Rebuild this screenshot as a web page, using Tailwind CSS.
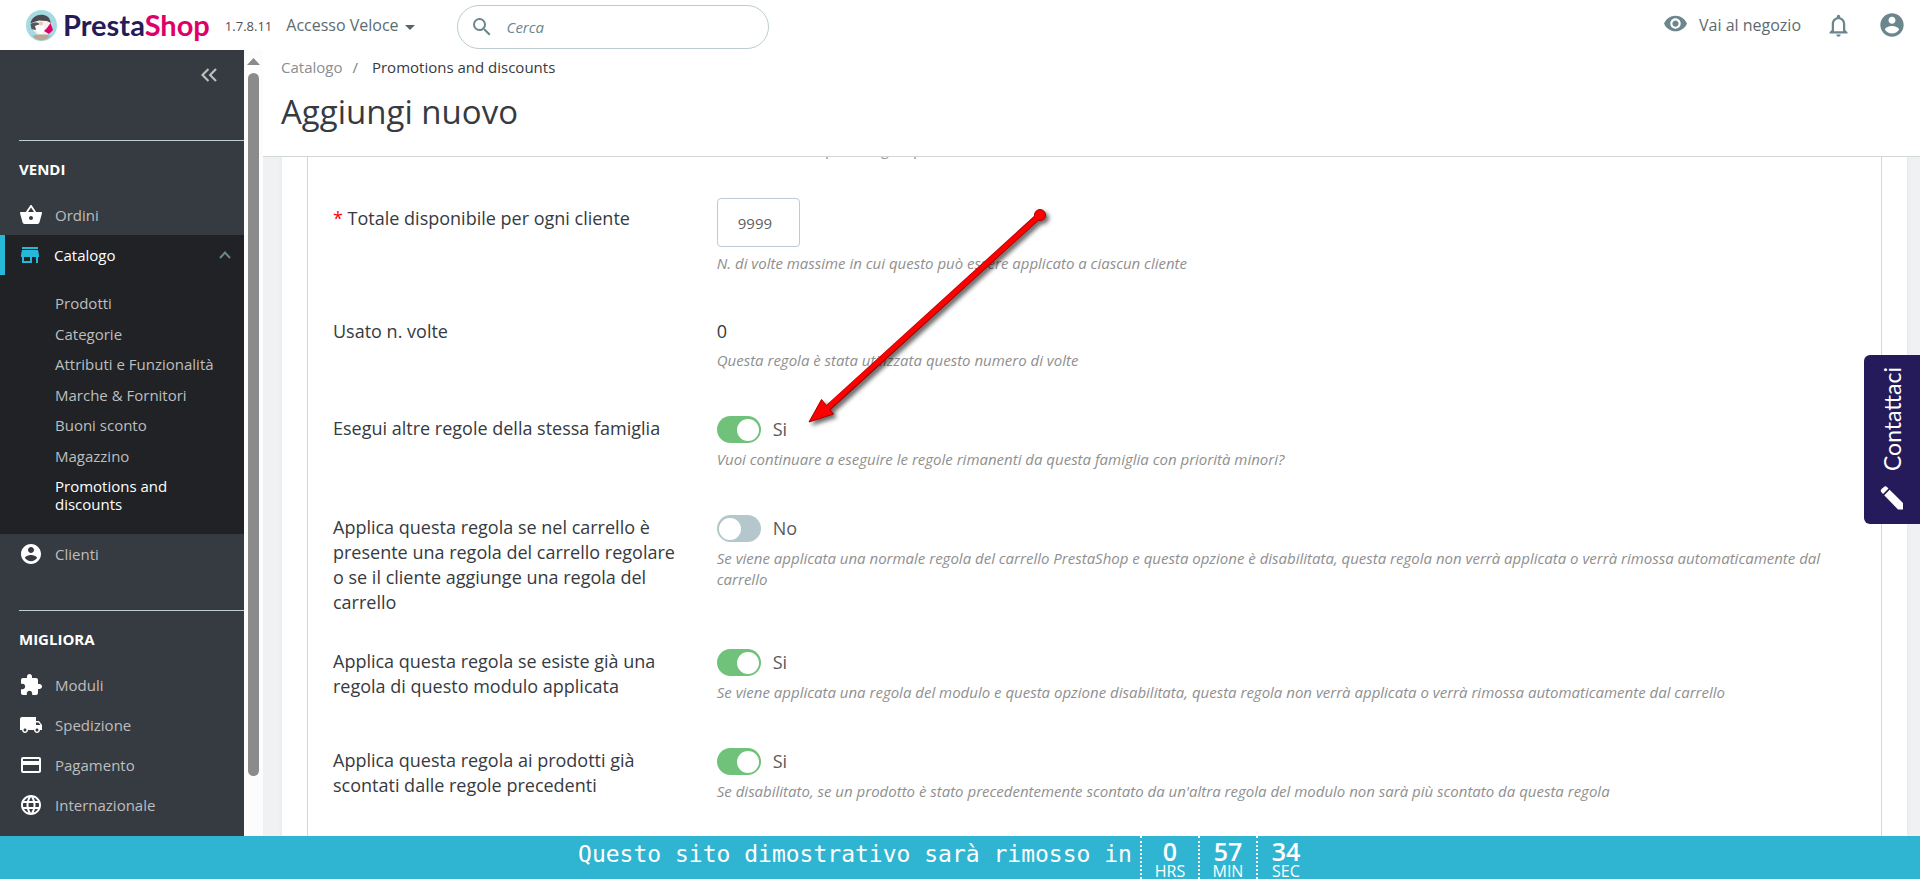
<!DOCTYPE html>
<html lang="it">
<head>
    <meta charset="UTF-8">
    <meta name="viewport" content="width=device-width, initial-scale=1.0">
    <title>Promotions and discounts • PrestaShop</title>
    <script src="https://cdn.jsdelivr.net/npm/@tailwindcss/browser@4"></script>
</head>
<body class="h-screen flex flex-col overflow-hidden bg-white text-[#363a41] font-['Open_Sans',sans-serif]">

<!-- Top bar -->
<header class="h-[50px] shrink-0 flex items-center pl-[26px] pr-[14px]">
    <a href="#" class="flex items-center gap-[6px]">
        <svg class="w-[31px] h-[31px]" viewBox="0 0 31 31">
            <circle cx="15.5" cy="15.5" r="15.5" fill="#a4dbe3"/>
            <path d="M6 15C7 8 11 5 16 5c6 0 9 4.500 9.500 10.500l-2 8-10 3-6-6z" fill="#f4f1f2"/>
            <path d="M4.500 13.500C5.500 7.500 10.500 4.500 16 4.700c5.500.2 8 3.300 9 8.300l-4-2-8-.5-5 1.500z" fill="#4c4a50"/>
            <path d="M4.500 14.500c2-2 5-2.500 8-1.500l1 2-4 5-4-1z" fill="#54565b"/>
            <path d="M9 16c3-2 6-2 9 0 1 3 0 6-3 8-3-1-5-3-6-8z" fill="#fff"/>
            <circle cx="15" cy="13.500" r="2" fill="#e9c9a8"/>
            <path d="M24.500 13l2.500 7-4 4-5-3 3-3z" fill="#df0067"/>
            <path d="M6.500 25.500c5-1.500 13-1.500 18 0-5 6.500-14 6.500-18 0z" fill="#b9a792"/>
        </svg>
        <span class="font-['Lato',sans-serif] font-bold text-[29px] leading-[30px] text-[#251b5b]">Presta<span class="text-[#df0067]">Shop</span></span>
    </a>
    <span class="ml-[15px] pt-1 text-[13px] text-[#4b5358]">1.7.8.11</span>
    <button class="ml-[14px] flex items-center gap-[6px] text-[16px] text-[#5c6b70]">Accesso Veloce
        <svg class="w-[10px] h-[5px] mt-1" viewBox="0 0 10 5"><path d="M0 0h10L5 5z" fill="#54666c"/></svg>
    </button>
    <form class="ml-[42px] mt-1 w-[312px] h-11 flex items-center gap-[13px] pl-3 border border-[#bbcdd2] rounded-full">
        <svg class="w-6 h-6 shrink-0 text-[#6c868e]" viewBox="0 0 24 24" fill="currentColor"><path d="M15.500 14h-.79l-.28-.27A6.471 6.471 0 0 0 16 9.500 6.500 6.500 0 1 0 9.500 16c1.610 0 3.090-.59 4.230-1.570l.27.28v.79l5 4.990L20.490 19l-4.990-5zm-6 0C7.010 14 5 11.990 5 9.500S7.010 5 9.500 5 14 7.010 14 9.500 11.990 14 9.500 14z"/></svg>
        <input type="text" aria-label="Cerca" placeholder="Cerca" class="w-full text-[15px] italic outline-none placeholder:text-[#6c868e]">
    </form>
    <div class="ml-auto flex items-center">
        <a href="#" class="flex items-center gap-[11px] text-[16px] text-[#5c6b70]">
            <svg class="w-[25px] h-[25px] -mt-1 text-[#6c868e]" viewBox="0 0 24 24" fill="currentColor"><path d="M12 4.500C7 4.500 2.730 7.610 1 12c1.730 4.390 6 7.500 11 7.500s9.270-3.110 11-7.500c-1.730-4.390-6-7.500-11-7.500zM12 17c-2.760 0-5-2.240-5-5s2.240-5 5-5 5 2.240 5 5-2.240 5-5 5zm0-8c-1.660 0-3 1.340-3 3s1.340 3 3 3 3-1.340 3-3-1.340-3-3-3z"/></svg>
            Vai al negozio
        </a>
        <button class="ml-6" aria-label="Notifiche">
            <svg class="w-[27px] h-[27px] text-[#6c868e]" viewBox="0 0 24 24" fill="currentColor"><path d="M12 22c1.100 0 2-.9 2-2h-4c0 1.100.89 2 2 2zm6-6v-5c0-3.070-1.640-5.640-4.500-6.320V4c0-.83-.67-1.500-1.500-1.500s-1.500.67-1.500 1.500v.68C7.630 5.360 6 7.920 6 11v5l-2 2v1h16v-1l-2-2zm-2 1H8v-6c0-2.480 1.510-4.500 4-4.500s4 2.020 4 4.500v6z"/></svg>
        </button>
        <button class="ml-[26px]" aria-label="Profilo">
            <svg class="w-[28px] h-[28px] text-[#6c868e]" viewBox="0 0 24 24" fill="currentColor"><path d="M12 2C6.480 2 2 6.480 2 12s4.480 10 10 10 10-4.480 10-10S17.520 2 12 2zm0 3c1.660 0 3 1.340 3 3s-1.340 3-3 3-3-1.340-3-3 1.340-3 3-3zm0 14.200c-2.500 0-4.710-1.280-6-3.220.03-1.990 4-3.080 6-3.080 1.990 0 5.970 1.090 6 3.080-1.290 1.940-3.500 3.220-6 3.220z"/></svg>
        </button>
    </div>
</header>

<div class="flex-1 min-h-0 flex">
    <!-- Sidebar -->
    <nav class="w-[244px] shrink-0 overflow-hidden bg-[#363a41] text-[15px] text-[#bebebe]">
        <div class="h-[90px] flex justify-end items-start pt-[12px] pr-[22px]">
            <button aria-label="Comprimi menu">
                <svg class="w-[26px] h-[26px]" viewBox="0 0 24 24" fill="none" stroke="#bebebe" stroke-width="2"><path d="M11.500 6.500L6 12l5.500 5.500M18.500 6.500L13 12l5.500 5.500"/></svg>
            </button>
        </div>
        <div class="ml-[19px] border-t border-[#bbcdd2] pt-[18px] pb-4 leading-5 font-bold text-white">VENDI</div>
        <a href="#" class="h-10 flex items-center gap-3 pl-[19px]">
            <svg class="w-6 h-6 text-white" viewBox="0 0 24 24" fill="currentColor"><path d="M17.210 9l-4.380-6.560c-.19-.28-.51-.42-.83-.42-.32 0-.64.14-.83.43L6.790 9H2c-.55 0-1 .45-1 1 0 .09.01.18.04.27l2.540 9.270c.23.84 1 1.460 1.920 1.460h13c.92 0 1.690-.62 1.930-1.460l2.540-9.270L23 10c0-.55-.45-1-1-1h-4.790zM9 9l3-4.400L15 9H9zm3 8c-1.100 0-2-.9-2-2s.9-2 2-2 2 .9 2 2-.9 2-2 2z"/></svg>
            Ordini
        </a>
        <div class="bg-[#202226] pb-[21px]">
            <a href="#" class="h-10 flex items-center gap-3 pl-[13px] pr-[11px] border-l-[5px] border-[#25b9d7] text-white">
                <svg class="w-6 h-6 text-[#25b9d7]" viewBox="0 0 24 24" fill="currentColor"><path d="M20 4H4v2h16V4zm1 10v-2l-1-5H4l-1 5v2h1v6h10v-6h4v6h2v-6h1zm-9 4H6v-4h6v4z"/></svg>
                Catalogo
                <svg class="w-4 h-4 ml-auto" viewBox="0 0 16 16" fill="none" stroke="#6c868e" stroke-width="2"><path d="M3 11l5-5.500L13 11"/></svg>
            </a>
            <ul class="h-[238px] pt-[19px] pl-[55px] pr-6 flex flex-col justify-between leading-[18px]">
                <li><a href="#">Prodotti</a></li>
                <li><a href="#">Categorie</a></li>
                <li><a href="#" class="whitespace-nowrap">Attributi e Funzionalità</a></li>
                <li><a href="#">Marche &amp; Fornitori</a></li>
                <li><a href="#">Buoni sconto</a></li>
                <li><a href="#">Magazzino</a></li>
                <li><a href="#" class="text-white">Promotions and discounts</a></li>
            </ul>
        </div>
        <a href="#" class="h-10 flex items-center gap-3 pl-[19px]">
            <svg class="w-6 h-6 text-white" viewBox="0 0 24 24" fill="currentColor"><path d="M12 2C6.480 2 2 6.480 2 12s4.480 10 10 10 10-4.480 10-10S17.520 2 12 2zm0 3c1.660 0 3 1.340 3 3s-1.340 3-3 3-3-1.340-3-3 1.340-3 3-3zm0 14.200c-2.500 0-4.710-1.280-6-3.220.03-1.990 4-3.080 6-3.080 1.990 0 5.970 1.090 6 3.080-1.290 1.940-3.500 3.220-6 3.220z"/></svg>
            Clienti
        </a>
        <div class="ml-[19px] mt-9 border-t border-[#bbcdd2] pt-[18px] pb-4 leading-5 font-bold text-white">MIGLIORA</div>
        <a href="#" class="h-10 flex items-center gap-3 pl-[19px]">
            <svg class="w-6 h-6 text-white" viewBox="0 0 24 24" fill="currentColor"><path d="M20.500 11H19V7c0-1.100-.9-2-2-2h-4V3.500C13 2.120 11.880 1 10.500 1S8 2.120 8 3.500V5H4c-1.100 0-1.990.9-1.990 2v3.800H3.500c1.490 0 2.700 1.210 2.700 2.700s-1.210 2.700-2.700 2.700H2V20c0 1.100.9 2 2 2h3.800v-1.500c0-1.490 1.210-2.700 2.700-2.700 1.490 0 2.700 1.210 2.700 2.700V22H17c1.100 0 2-.9 2-2v-4h1.500c1.380 0 2.500-1.120 2.500-2.500S21.880 11 20.500 11z"/></svg>
            Moduli
        </a>
        <a href="#" class="h-10 flex items-center gap-3 pl-[19px]">
            <svg class="w-6 h-6 text-white" viewBox="0 0 24 24" fill="currentColor"><path d="M20 8h-3V4H3c-1.100 0-2 .9-2 2v11h2c0 1.660 1.340 3 3 3s3-1.340 3-3h6c0 1.660 1.340 3 3 3s3-1.340 3-3h2v-5l-3-4zM6 18.500c-.83 0-1.500-.67-1.500-1.500s.67-1.500 1.500-1.500 1.500.67 1.500 1.500-.67 1.500-1.500 1.500zm13.500-9l1.960 2.500H17V9.500h2.500zm-1.500 9c-.83 0-1.500-.67-1.500-1.500s.67-1.500 1.500-1.500 1.500.67 1.500 1.500-.67 1.500-1.500 1.500z"/></svg>
            Spedizione
        </a>
        <a href="#" class="h-10 flex items-center gap-3 pl-[19px]">
            <svg class="w-6 h-6 text-white" viewBox="0 0 24 24" fill="currentColor"><path d="M20 4H4c-1.110 0-1.990.89-1.990 2L2 18c0 1.110.89 2 2 2h16c1.110 0 2-.89 2-2V6c0-1.110-.89-2-2-2zm0 14H4v-6h16v6zm0-10H4V6h16v2z"/></svg>
            Pagamento
        </a>
        <a href="#" class="h-10 flex items-center gap-3 pl-[19px]">
            <svg class="w-6 h-6 text-white" viewBox="0 0 24 24" fill="currentColor"><path d="M11.990 2C6.470 2 2 6.480 2 12s4.470 10 9.990 10C17.520 22 22 17.520 22 12S17.520 2 11.990 2zm6.930 6h-2.950c-.32-1.250-.78-2.450-1.380-3.560 1.840.63 3.370 1.910 4.330 3.560zM12 4.040c.83 1.200 1.480 2.530 1.910 3.960h-3.820c.43-1.430 1.080-2.760 1.910-3.960zM4.260 14C4.100 13.360 4 12.690 4 12s.1-1.360.26-2h3.380c-.08.66-.14 1.320-.14 2s.06 1.340.14 2H4.260zm.82 2h2.950c.32 1.250.78 2.450 1.380 3.560-1.840-.63-3.370-1.900-4.330-3.560zm2.950-8H5.080c.96-1.660 2.490-2.930 4.330-3.560C8.810 5.550 8.350 6.750 8.030 8zM12 19.960c-.83-1.200-1.480-2.530-1.910-3.960h3.820c-.43 1.430-1.080 2.760-1.910 3.960zM14.340 14H9.660c-.09-.66-.16-1.320-.16-2s.07-1.350.16-2h4.680c.09.65.16 1.320.16 2s-.07 1.340-.16 2zm.25 5.560c.6-1.110 1.060-2.310 1.380-3.560h2.950c-.96 1.650-2.490 2.930-4.330 3.560zM16.360 14c.08-.66.14-1.320.14-2s-.06-1.340-.14-2h3.380c.16.64.26 1.310.26 2s-.1 1.360-.26 2h-3.380z"/></svg>
            Internazionale
        </a>
    </nav>

    <!-- Sidebar scrollbar -->
    <div class="w-[19px] shrink-0 flex flex-col items-center pt-2 bg-[#fcfcfc]">
        <svg class="w-[13px] h-[7px]" viewBox="0 0 13 7"><path d="M6.500 0L13 7H0z" fill="#8b8b8b"/></svg>
        <div class="mt-2 w-[11px] h-[703px] rounded-full bg-[#8b8b8b]"></div>
    </div>

    <main class="flex-1 min-w-0 flex flex-col">
        <div class="h-[107px] shrink-0 pl-[18px] border-b border-[#d3d8db] bg-white">
            <nav class="pt-[6px] flex gap-[10px] text-[15px] leading-[22px]">
                <a href="#" class="text-[#8a8e91]">Catalogo</a>
                <span class="text-[#6c868e]">/</span>
                <a href="#" class="ml-1">Promotions and discounts</a>
            </nav>
            <h1 class="mt-3 text-[33px] leading-[44px]">Aggiungi nuovo</h1>
        </div>

        <div class="flex-1 min-h-0 overflow-hidden flex pl-[19px] pr-[13px] bg-[#eff1f2]">
            <div class="flex-1 px-[25px] bg-white shadow-[0_0_4px_#dfe4e6]">
                <form class="flow-root min-h-full border-x border-[#d3d8db] px-[25px] text-[18px] leading-[25px]">
                    <div class="-mt-[18px] grid grid-cols-4 gap-3">
                        <p class="col-span-3 col-start-2 text-[15px] leading-[21px] italic text-[#8f8f8f]">Numero di volte per la regola per tutti i clienti</p>
                    </div>

                    <div class="mt-[38px] grid grid-cols-4 gap-3">
                        <label for="quantity" class="pt-2 pr-6"><span class="text-[#f00]">*</span> Totale disponibile per ogni cliente</label>
                        <div class="col-span-3 pb-[11px]">
                            <input id="quantity" type="text" value="9999" class="block w-[83px] h-[49px] px-5 border border-[#bbcdd2] rounded text-[15px] text-[#5f5f5f]">
                            <p class="mt-[6px] text-[15px] leading-[21px] italic text-[#8f8f8f]">N. di volte massime in cui questo può essere applicato a ciascun cliente</p>
                        </div>
                    </div>

                    <div class="mt-[34px] grid grid-cols-4 gap-3">
                        <div class="pr-6">Usato n. volte</div>
                        <div class="col-span-3 pb-[11px]">
                            <div>0</div>
                            <p class="mt-[6px] text-[15px] leading-[21px] italic text-[#8f8f8f]">Questa regola è stata utilizzata questo numero di volte</p>
                        </div>
                    </div>

                    <div class="mt-[34px] grid grid-cols-4 gap-3">
                        <label for="family" class="pr-6">Esegui altre regole della stessa famiglia</label>
                        <div class="col-span-3 pb-[11px]">
                            <div class="flex items-center gap-3 text-[#5a5a5a]">
                                <input id="family" type="checkbox" checked class="appearance-none w-11 h-[27px] p-[2px] flex items-center rounded-full bg-[#b3c7cd] checked:bg-[#70c17a] checked:justify-end before:block before:w-[22px] before:h-[22px] before:rounded-full before:bg-white">
                                <span>Si</span>
                            </div>
                            <p class="mt-[6px] text-[15px] leading-[21px] italic text-[#8f8f8f]">Vuoi continuare a eseguire le regole rimanenti da questa famiglia con priorità minori?</p>
                        </div>
                    </div>

                    <div class="mt-[34px] grid grid-cols-4 gap-3">
                        <label for="cart_rule" class="pr-6">Applica questa regola se nel carrello è presente una regola del carrello regolare o se il cliente aggiunge una regola del carrello</label>
                        <div class="col-span-3 pb-[11px]">
                            <div class="flex items-center gap-3 text-[#5a5a5a]">
                                <input id="cart_rule" type="checkbox" class="appearance-none w-11 h-[27px] p-[2px] flex items-center rounded-full bg-[#b3c7cd] checked:bg-[#70c17a] checked:justify-end before:block before:w-[22px] before:h-[22px] before:rounded-full before:bg-white">
                                <span>No</span>
                            </div>
                            <p class="mt-[6px] text-[15px] leading-[21px] italic text-[#8f8f8f]">Se viene applicata una normale regola del carrello PrestaShop e questa opzione è disabilitata, questa regola non verrà applicata o verrà rimossa automaticamente dal carrello</p>
                        </div>
                    </div>

                    <div class="mt-[34px] grid grid-cols-4 gap-3">
                        <label for="module_rule" class="pr-6">Applica questa regola se esiste già una regola di questo modulo applicata</label>
                        <div class="col-span-3 pb-[11px]">
                            <div class="flex items-center gap-3 text-[#5a5a5a]">
                                <input id="module_rule" type="checkbox" checked class="appearance-none w-11 h-[27px] p-[2px] flex items-center rounded-full bg-[#b3c7cd] checked:bg-[#70c17a] checked:justify-end before:block before:w-[22px] before:h-[22px] before:rounded-full before:bg-white">
                                <span>Si</span>
                            </div>
                            <p class="mt-[6px] text-[15px] leading-[21px] italic text-[#8f8f8f]">Se viene applicata una regola del modulo e questa opzione disabilitata, questa regola non verrà applicata o verrà rimossa automaticamente dal carrello</p>
                        </div>
                    </div>

                    <div class="mt-[34px] grid grid-cols-4 gap-3">
                        <label for="discounted" class="pr-6">Applica questa regola ai prodotti già scontati dalle regole precedenti</label>
                        <div class="col-span-3 pb-[11px]">
                            <div class="flex items-center gap-3 text-[#5a5a5a]">
                                <input id="discounted" type="checkbox" checked class="appearance-none w-11 h-[27px] p-[2px] flex items-center rounded-full bg-[#b3c7cd] checked:bg-[#70c17a] checked:justify-end before:block before:w-[22px] before:h-[22px] before:rounded-full before:bg-white">
                                <span>Si</span>
                            </div>
                            <p class="mt-[6px] text-[15px] leading-[21px] italic text-[#8f8f8f]">Se disabilitato, se un prodotto è stato precedentemente scontato da un'altra regola del modulo non sarà più scontato da questa regola</p>
                        </div>
                    </div>
                </form>
            </div>
        </div>
    </main>
</div>

<!-- Demo countdown -->
<footer class="h-[43px] shrink-0 flex justify-center pr-7 bg-[#2fb5d2] text-white">
    <p class="pr-2 font-['DejaVu_Sans_Mono',monospace] text-[23px] leading-[37px]">Questo sito dimostrativo sarà rimosso in</p>
    <div class="flex text-center">
        <div class="w-[58px] border-l-2 border-dotted border-white"><b class="block pt-[3px] text-[25px] leading-6 font-semibold">0</b><span class="block text-[16px] leading-4">HRS</span></div>
        <div class="w-[58px] border-l-2 border-dotted border-white"><b class="block pt-[3px] text-[25px] leading-6 font-semibold">57</b><span class="block text-[16px] leading-4">MIN</span></div>
        <div class="w-[58px] border-l-2 border-dotted border-white"><b class="block pt-[3px] text-[25px] leading-6 font-semibold">34</b><span class="block text-[16px] leading-4">SEC</span></div>
    </div>
</footer>

<!-- Contact tab -->
<a href="#" class="fixed right-0 top-[355px] w-14 h-[169px] flex flex-col items-center justify-between pt-3 pb-[14px] rounded-l-md bg-[#251b5b] text-white">
    <span class="[writing-mode:vertical-rl] rotate-180 font-['Lato',sans-serif] text-[23px] leading-6">Contattaci</span>
    <svg class="w-6 h-6" viewBox="0 0 24 24" fill="#fff"><path d="M1.500 3L4.500.4Q6 0 7.200 1.200L8.500 2.500 3 8 1.200 6Q0 4.500 1.500 3zM4.200 9.200L9.700 3.700 23 17v6.500h-5z"/></svg>
</a>

<!-- Arrow -->
<svg class="absolute left-[800px] top-[200px] w-[260px] h-[240px] pointer-events-none drop-shadow-[3px_3px_2px_rgba(0,0,0,0.6)]" viewBox="0 0 260 240">
    <path d="M240 15L28 208" stroke="#a00000" stroke-width="6.500"/>
    <path d="M9 222L21.500 199.500 33.500 214z" fill="#f00" stroke="#a00000"/>
    <circle cx="240" cy="15" r="5.500" fill="#f00" stroke="#a00000"/>
    <path d="M240 15L26 209" stroke="#f00" stroke-width="5"/>
</svg>
</body>
</html>
